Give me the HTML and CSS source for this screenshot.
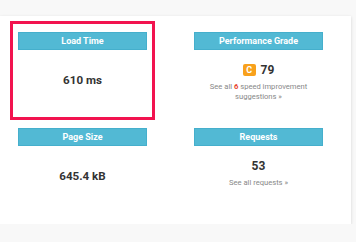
FILE: index.html
```html
<!DOCTYPE html>
<html lang="en">
<head>
    <meta charset="utf-8" />
    <title>Page summary</title>
    <link rel="stylesheet" href="styles.css">
</head>
<body>
    <div class="card">
        <div class="summary">
            <!--load time, highlighted-->
            <div class="cell active">
                <div class="head">Load Time</div>
                <div class="value big">610 ms</div>
            </div>
            <div class="cell">
                <div class="head">Performance Grade</div>
                <div class="value grade"><span class="badge">C</span>79</div>
                <p class="more">See all <b>6</b> speed improvement<br />suggestions &raquo;</p>
            </div>
            <div class="cell">
                <div class="head">Page Size</div>
                <div class="value big">645.4 kB</div>
            </div>
            <div class="cell">
                <div class="head">Requests</div>
                <div class="value">53</div>
                <p class="more">See all requests &raquo;</p>
            </div>
        </div>
    </div>
</body>
</html>
```

FILE: styles.css
```css
* {
    margin: 0;
    padding: 0;
    box-sizing: border-box;
}

body {
    background-color: #f8f8f8;
    font-family: Roboto, "Liberation Sans", sans-serif;
    color: #333;
}

.card {
    width: 351px;
    margin-top: 16px;
    padding: 8px 23px 11px 13px;
    background-color: #fff;
    box-shadow: 0 1px 3px rgba(0, 0, 0, 0.15);
}

.summary {
    display: grid;
    grid-template-columns: 139px 139px;
    column-gap: 37px;
    row-gap: 3px;
}

.cell {
    height: 93px;
    padding: 8px 5px;
    text-align: center;
}

    .cell.active {
        outline: 3px solid #f2134f;
    }

.head {
    height: 18px;
    line-height: 16px;
    background-color: #52b9d4;
    border: 1px solid #45afcc;
    color: #fff;
    font-size: 9px;
    font-weight: bold;
}

.value {
    margin-top: 13px;
    height: 14px;
    line-height: 14px;
    font-size: 12px;
    font-weight: bold;
}

    .value.big {
        margin-top: 23px;
        font-size: 11.6px;
    }

.grade {
    display: flex;
    justify-content: center;
    align-items: center;
}

.badge {
    width: 13px;
    height: 12px;
    line-height: 12px;
    margin-right: 5px;
    border-radius: 2px;
    background-color: #f8a11c;
    color: #fff;
    font-size: 9px;
}

.more {
    margin-top: 5px;
    line-height: 10px;
    font-size: 7.6px;
    color: #888;
}

    .more b {
        color: #e8452c;
    }
```
